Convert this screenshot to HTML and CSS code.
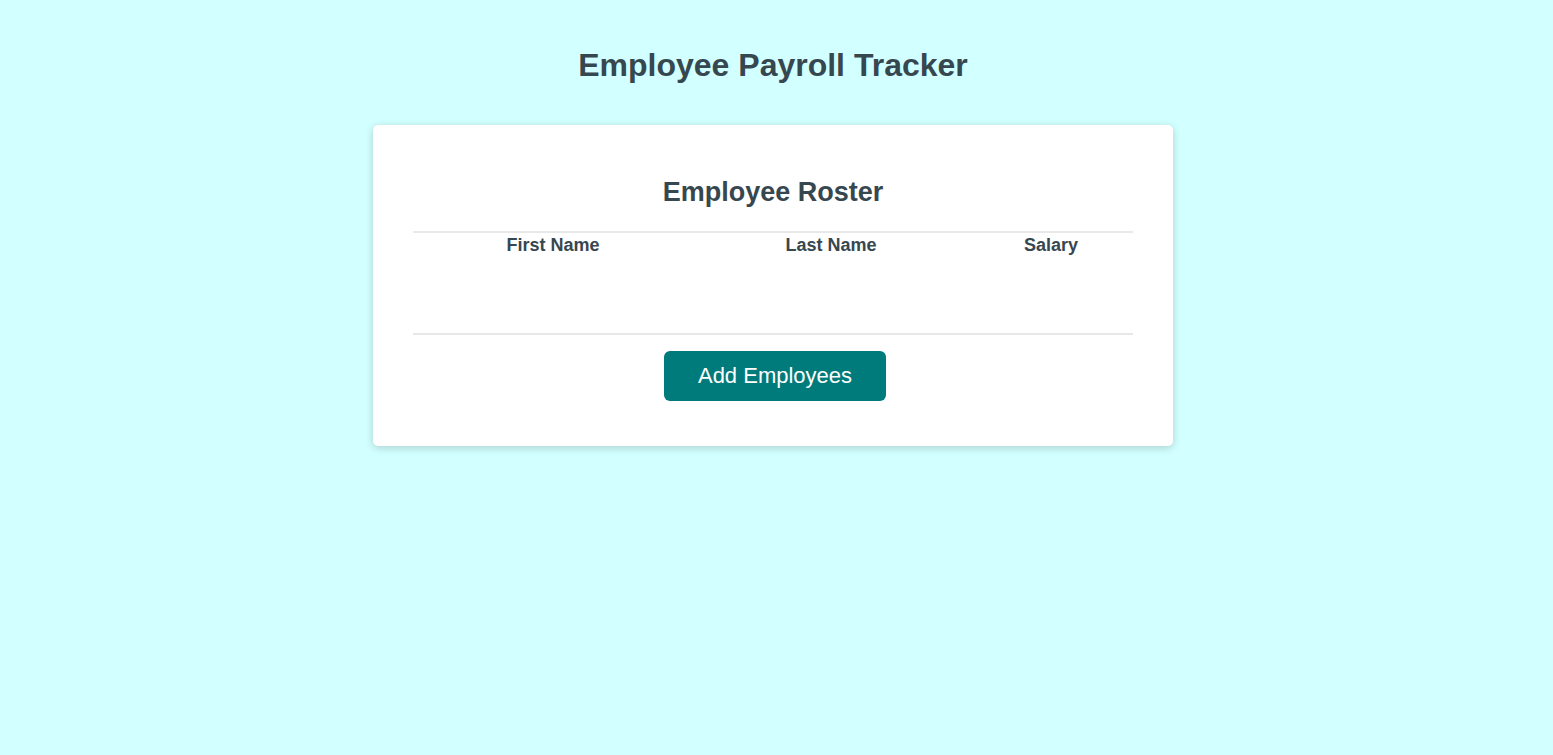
FILE: index.html
```html
<!DOCTYPE html>
<html lang="en">
<head>
<meta charset="utf-8">
<title>Employee Payroll Tracker</title>
<link rel="stylesheet" href="styles.css">
</head>
<body>
<header class="page-header">
  <h1 class="title">Employee Payroll Tracker</h1>
</header>
<main class="card">
  <h2 class="card-title">Employee Roster</h2>
  <div class="roster-wrap">
    <table class="roster">
      <thead>
        <tr>
          <th class="col-first">First Name</th>
          <th class="col-last">Last Name</th>
          <th class="col-salary">Salary</th>
        </tr>
      </thead>
      <tbody class="roster-body"></tbody>
    </table>
  </div>
  <div class="actions">
    <button class="btn" type="button">Add Employees</button>
  </div>
</main>
</body>
</html>
```
FILE: styles.css
```css
html, body {
  margin: 0;
  padding: 0;
}
body {
  background: #d2ffff;
  font-family: "Liberation Sans", Arial, Helvetica, sans-serif;
  color: #37474f;
  min-height: 100vh;
  padding-right: 7px;
}
.page-header {
  display: flex;
  justify-content: center;
}
.title {
  font-size: 32px;
  line-height: 37px;
  font-weight: bold;
  margin: 47px 0 41px;
}
.card {
  width: 720px;
  margin: 0 auto;
  background: #fff;
  border-radius: 5px;
  padding: 40px 40px 45px;
  box-shadow: 0 2px 8px rgba(0, 0, 0, 0.18);
}
.card-title {
  text-align: center;
  font-size: 27px;
  line-height: 30px;
  margin: 12px 0 24px;
}
.roster-wrap {
  border-top: 2px solid #e8e8e8;
  border-bottom: 2px solid #e8e8e8;
  height: 100px;
}
.roster {
  width: 100%;
  border-collapse: collapse;
}
.roster th {
  font-size: 18px;
  font-weight: bold;
  padding: 2px 0 0;
  text-align: center;
  vertical-align: top;
}
.col-first { width: 280px; }
.col-last { width: 276px; }
.col-salary { width: 164px; }
.actions {
  display: flex;
  justify-content: center;
  margin-top: 16px;
  padding-left: 4px;
}
.btn {
  width: 222px;
  height: 50px;
  background: #007b7b;
  color: #fff;
  border: none;
  border-radius: 6px;
  font-family: "Liberation Sans", Arial, Helvetica, sans-serif;
  font-size: 22px;
  cursor: pointer;
}
```
